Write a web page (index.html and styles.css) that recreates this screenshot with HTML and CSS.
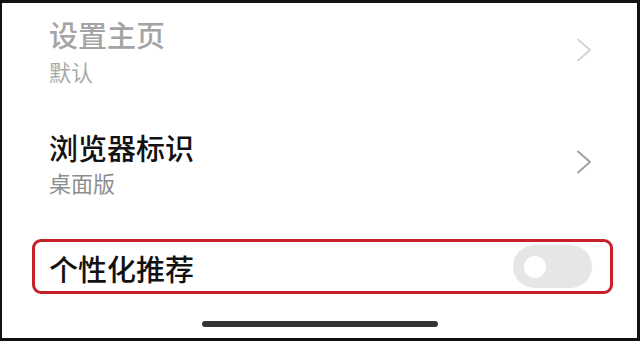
FILE: index.html
```html
<!DOCTYPE html>
<html lang="zh">
<head>
<meta charset="utf-8">
<link rel="stylesheet" href="styles.css">
</head>
<body>
<div class="frame">
  <div class="list">
    <div class="row row-first">
      <div class="texts">
        <div class="title title-dim">设置主页</div>
        <div class="sub sub-dim">默认</div>
      </div>
      <svg class="chev chev-dim" width="16" height="24" viewBox="0 0 16 24"><path d="M2 1.5 L14 12 L2 22.5" fill="none" stroke="currentColor" stroke-width="1.8" stroke-linecap="round" stroke-linejoin="round"/></svg>
    </div>
    <div class="row row-second">
      <div class="texts">
        <div class="title">浏览器标识</div>
        <div class="sub">桌面版</div>
      </div>
      <svg class="chev" width="16" height="24" viewBox="0 0 16 24"><path d="M2 1.5 L14 12 L2 22.5" fill="none" stroke="currentColor" stroke-width="1.8" stroke-linecap="round" stroke-linejoin="round"/></svg>
    </div>
    <div class="row-toggle">
      <div class="title">个性化推荐</div>
      <div class="switch"><span class="knob"></span></div>
    </div>
  </div>
  <div class="home-bar"></div>
</div>
</body>
</html>
```

FILE: styles.css
```css
html, body {
  margin: 0;
  padding: 0;
  background: #000;
}
body {
  width: 640px;
  height: 341px;
  overflow: hidden;
  font-family: "Noto Sans CJK SC", "Noto Sans", sans-serif;
}
.frame {
  box-sizing: border-box;
  width: 640px;
  height: 341px;
  border-style: solid;
  border-color: #111;
  border-width: 3px 3px 3px 2px;
  background: #fff;
  display: flex;
  flex-direction: column;
}
.list {
  display: flex;
  flex-direction: column;
}
.row {
  display: flex;
  align-items: center;
  justify-content: space-between;
  padding: 0 45px 0 47px;
}
.row-first {
  margin-top: 13px;
}
.row-first .sub {
  margin-top: 3px;
}
.row-second {
  margin-top: 42px;
}
.row-second .sub {
  margin-top: 1px;
}
.texts {
  display: flex;
  flex-direction: column;
}
.title {
  font-size: 29px;
  line-height: 36px;
  color: #121212;
  font-weight: 500;
}
.sub {
  font-size: 22px;
  line-height: 32px;
  color: #8e8e8e;
}
.title-dim {
  color: #a4a4a4;
}
.sub-dim {
  color: #a9a9a9;
}
.chev {
  color: #9e9e9e;
  margin-top: -3px;
}
.chev-dim {
  color: #d2d2d2;
}
.row-toggle {
  margin: 41px 24px 0 30px;
  height: 55px;
  box-sizing: border-box;
  border: 3px solid #c8212b;
  border-radius: 9px;
  display: flex;
  align-items: center;
  justify-content: space-between;
  padding: 0 18px 0 14px;
}
.row-toggle .title {
  margin-top: 2px;
}
.switch {
  width: 79px;
  height: 43px;
  border-radius: 22px;
  background: #e6e6e6;
  display: flex;
  align-items: center;
  padding-left: 11px;
  box-sizing: border-box;
}
.knob {
  width: 22px;
  height: 22px;
  border-radius: 50%;
  background: #fff;
}
.home-bar {
  align-self: center;
  margin-top: 27px;
  width: 236px;
  height: 6px;
  border-radius: 3px;
  background: #333;
}
```
